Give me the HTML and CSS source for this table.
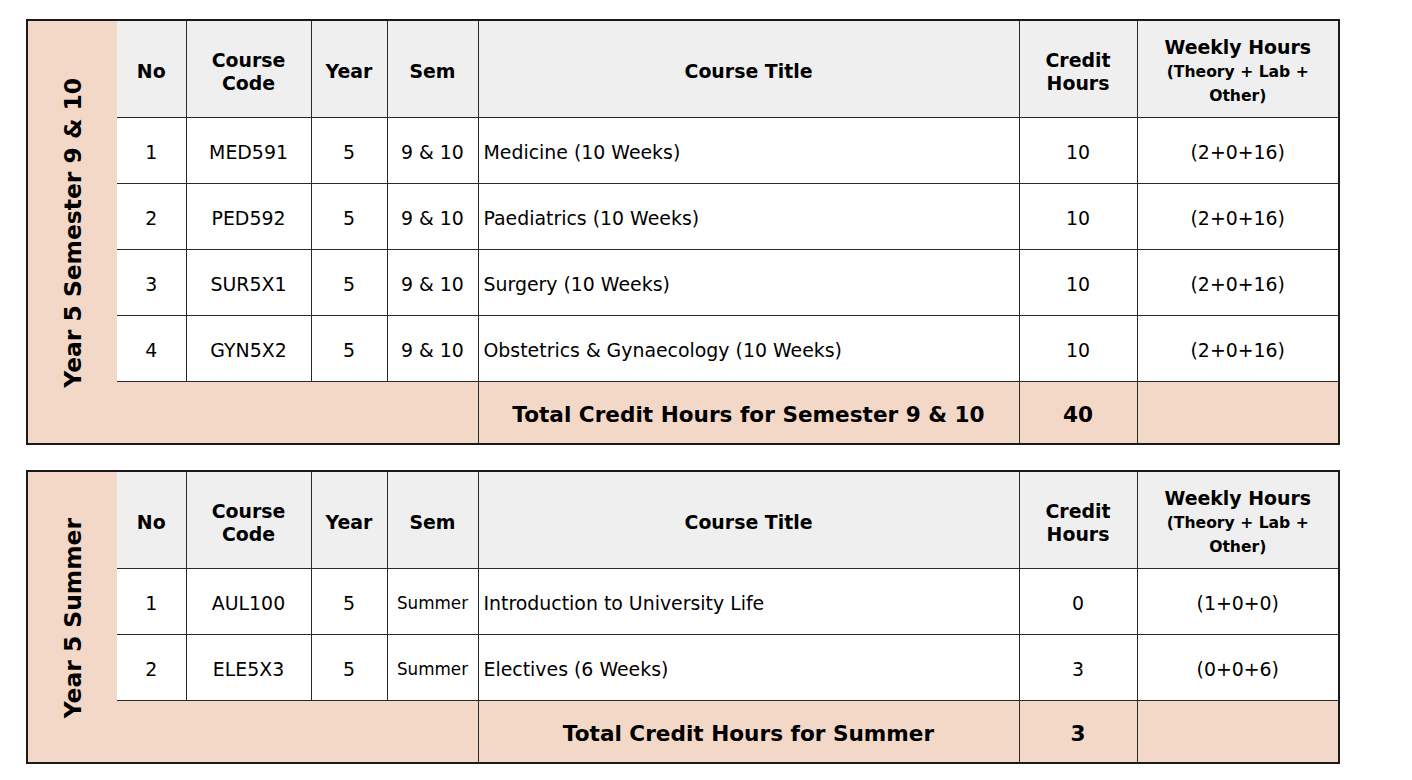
FILE: index.html
```html
<!DOCTYPE html>
<html>
<head>
<meta charset="utf-8">
<link rel="stylesheet" href="styles.css">
</head>
<body>
<div class="page">
  <table class="plan">
    <colgroup>
      <col class="c-side"><col class="c-no"><col class="c-code"><col class="c-year"><col class="c-sem"><col class="c-title"><col class="c-credit"><col class="c-weekly">
    </colgroup>
    <tr class="head">
      <td class="side" rowspan="6"><span class="side-label">Year 5 Semester 9 &amp; 10</span></td>
      <th class="first">No</th>
      <th>Course<br>Code</th>
      <th>Year</th>
      <th>Sem</th>
      <th>Course Title</th>
      <th>Credit<br>Hours</th>
      <th>Weekly Hours<br><span class="small">(Theory + Lab +<br>Other)</span></th>
    </tr>
    <tr class="row">
      <td class="first">1</td><td>MED591</td><td>5</td><td>9 &amp; 10</td><td class="title">Medicine (10 Weeks)</td><td>10</td><td>(2+0+16)</td>
    </tr>
    <tr class="row">
      <td class="first">2</td><td>PED592</td><td>5</td><td>9 &amp; 10</td><td class="title">Paediatrics (10 Weeks)</td><td>10</td><td>(2+0+16)</td>
    </tr>
    <tr class="row">
      <td class="first">3</td><td>SUR5X1</td><td>5</td><td>9 &amp; 10</td><td class="title">Surgery (10 Weeks)</td><td>10</td><td>(2+0+16)</td>
    </tr>
    <tr class="row">
      <td class="first">4</td><td>GYN5X2</td><td>5</td><td>9 &amp; 10</td><td class="title">Obstetrics &amp; Gynaecology (10 Weeks)</td><td>10</td><td>(2+0+16)</td>
    </tr>
    <tr class="total">
      <td class="first blank" colspan="4"></td>
      <td>Total Credit Hours for Semester 9 &amp; 10</td>
      <td>40</td>
      <td></td>
    </tr>
  </table>

  <table class="plan">
    <colgroup>
      <col class="c-side"><col class="c-no"><col class="c-code"><col class="c-year"><col class="c-sem"><col class="c-title"><col class="c-credit"><col class="c-weekly">
    </colgroup>
    <tr class="head">
      <td class="side" rowspan="4"><span class="side-label">Year 5 Summer</span></td>
      <th class="first">No</th>
      <th>Course<br>Code</th>
      <th>Year</th>
      <th>Sem</th>
      <th>Course Title</th>
      <th>Credit<br>Hours</th>
      <th>Weekly Hours<br><span class="small">(Theory + Lab +<br>Other)</span></th>
    </tr>
    <tr class="row">
      <td class="first">1</td><td>AUL100</td><td>5</td><td class="sem-small">Summer</td><td class="title">Introduction to University Life</td><td>0</td><td>(1+0+0)</td>
    </tr>
    <tr class="row">
      <td class="first">2</td><td>ELE5X3</td><td>5</td><td class="sem-small">Summer</td><td class="title">Electives (6 Weeks)</td><td>3</td><td>(0+0+6)</td>
    </tr>
    <tr class="total">
      <td class="first blank" colspan="4"></td>
      <td>Total Credit Hours for Summer</td>
      <td>3</td>
      <td></td>
    </tr>
  </table>
</div>
</body>
</html>
```

FILE: styles.css
```css
html, body {
  margin: 0;
  padding: 0;
  background: #ffffff;
}

.page {
  padding: 19px 0 0 26px;
  display: flex;
  flex-direction: column;
  gap: 25px;
  align-items: flex-start;
}

.plan {
  border-collapse: collapse;
  table-layout: fixed;
  width: 1312px;
  border: 2px solid #1a1a1a;
  font-family: "DejaVu Sans", sans-serif;
  font-size: 18.9px;
  color: #000;
}

.c-side { width: 90px; }
.c-no { width: 69px; }
.c-code { width: 125px; }
.c-year { width: 76px; }
.c-sem { width: 91px; }
.c-title { width: 541px; }
.c-credit { width: 118px; }
.c-weekly { width: 202px; }

.plan th,
.plan td {
  border: 1px solid #2a2a2a;
  padding: 3px 4px 0;
  text-align: center;
  vertical-align: middle;
  white-space: nowrap;
}

.plan th {
  background: #efefef;
  font-weight: bold;
  line-height: 23px;
  padding-top: 6px;
}

.head {
  height: 97px;
}

.row {
  height: 66px;
}

.row td {
  background: #ffffff;
}

.plan td.side {
  background: #f3d8c7;
  border-right-style: hidden;
  padding: 6px 0 0;
}

.side-label {
  display: inline-block;
  writing-mode: vertical-rl;
  transform: rotate(180deg);
  font-weight: bold;
  font-size: 23.4px;
  line-height: 28px;
}

.plan td.first,
.plan th.first {
  border-left-style: hidden;
}

.small {
  font-size: 15.6px;
  line-height: 22px;
}

.plan td.title {
  text-align: left;
  padding-left: 5px;
}

.plan td.sem-small {
  font-size: 16.8px;
  padding-left: 0;
  padding-right: 0;
}

.total {
  height: 63px;
}

.total td {
  background: #f3d8c7;
  font-weight: bold;
  font-size: 21.6px;
  padding-top: 4px;
}
```
